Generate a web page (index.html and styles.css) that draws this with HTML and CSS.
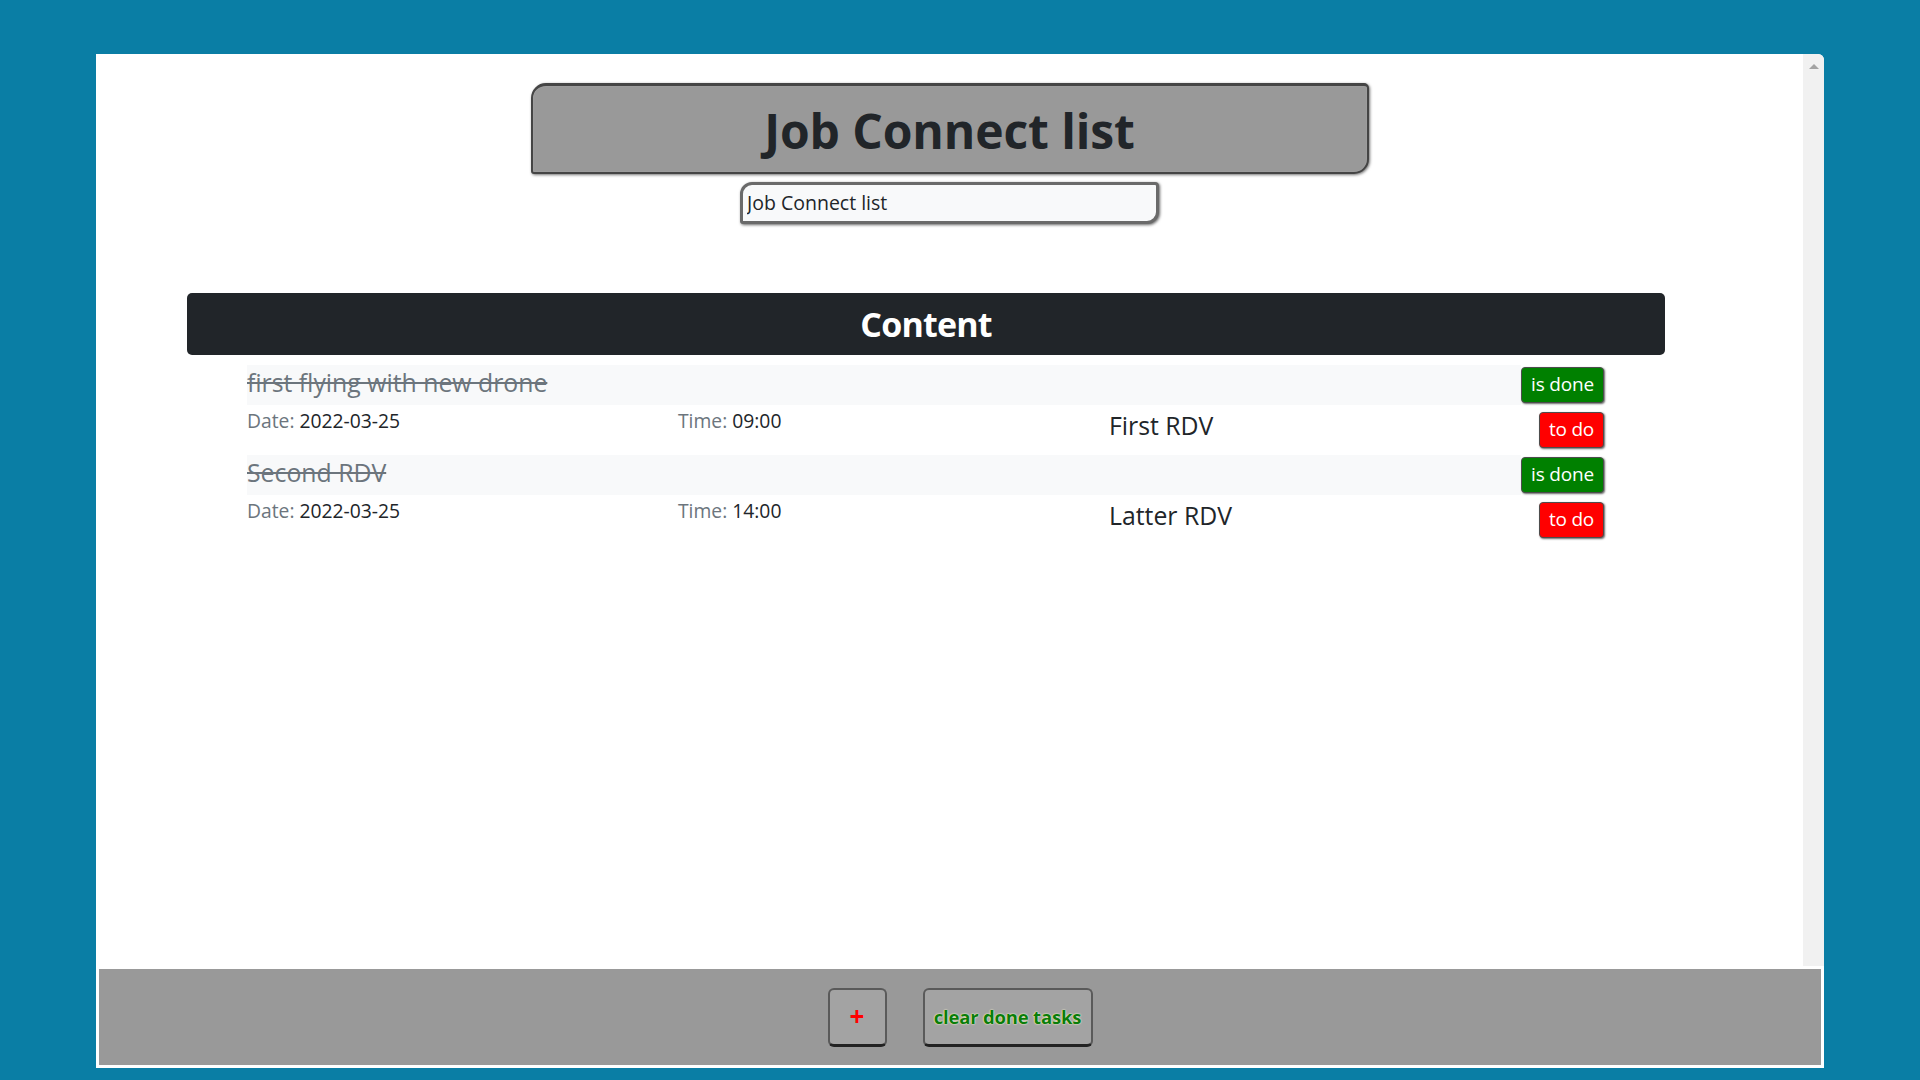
FILE: index.html
```html
<!DOCTYPE html>
<html lang="en">
<head>
<meta charset="utf-8">
<title>Job Connect list</title>
<link rel="stylesheet" href="styles.css">
</head>
<body>
<div class="app">
  <div class="viewport">
    <main class="main">
      <header class="head">
        <h1 class="title-box">Job Connect list</h1>
        <input class="title-input" type="text" value="Job Connect list">
      </header>
      <section class="content">
        <h2 class="content-bar">Content</h2>
        <div class="tasks">
          <div class="task">
            <div class="task-title-row">
              <div class="task-title">first flying with new drone</div>
              <button class="btn btn-done">is done</button>
            </div>
            <div class="task-details">
              <div class="detail"><span class="label">Date:</span> 2022-03-25</div>
              <div class="detail"><span class="label">Time:</span> 09:00</div>
              <div class="detail-name">First RDV</div>
              <button class="btn btn-todo">to do</button>
            </div>
          </div>
          <div class="task">
            <div class="task-title-row">
              <div class="task-title">Second RDV</div>
              <button class="btn btn-done">is done</button>
            </div>
            <div class="task-details">
              <div class="detail"><span class="label">Date:</span> 2022-03-25</div>
              <div class="detail"><span class="label">Time:</span> 14:00</div>
              <div class="detail-name">Latter RDV</div>
              <button class="btn btn-todo">to do</button>
            </div>
          </div>
        </div>
      </section>
    </main>
    <div class="scrollbar"><span class="arrow-up"></span></div>
  </div>
  <footer class="footer">
    <button class="fbtn fbtn-add">+</button>
    <button class="fbtn fbtn-clear">clear done tasks</button>
  </footer>
</div>
</body>
</html>
```
FILE: styles.css
```css
* { box-sizing: border-box; }
html, body { margin: 0; padding: 0; }
body {
  background: #0a7ea5;
  font-family: "Open Sans", "Noto Sans", sans-serif;
  color: #212529;
  height: 1080px;
  overflow: hidden;
  padding-top: 54px;
}
.app {
  margin: 0 96px;
  height: 1014px;
  background: #fff;
  border-radius: 0 6px 0 0;
  display: flex;
  flex-direction: column;
  overflow: hidden;
}
.viewport {
  height: 912px;
  display: flex;
}
.main { flex: 1; }
.scrollbar {
  width: 21px;
  background: #f1f1f1;
  display: flex;
  justify-content: center;
  padding-top: 10px;
}
.arrow-up {
  width: 0; height: 0;
  border-left: 5px solid transparent;
  border-right: 5px solid transparent;
  border-bottom: 5px solid #a3a3a3;
}
.head {
  display: flex;
  flex-direction: column;
  align-items: center;
  padding-top: 29px;
}
.title-box {
  margin: 0;
  width: 838px;
  height: 91px;
  background: #999;
  border: 2px solid #454545;
  border-top-width: 3px;
  border-radius: 15px 5px 15px 3px;
  box-shadow: 1px 1px 3px rgba(0,0,0,.55), inset 0 0 1px rgba(255,255,255,.4);
  display: flex;
  align-items: center;
  justify-content: center;
  font-size: 48px;
  font-weight: 700;
  letter-spacing: -0.1px;
  color: #212529;
  padding-top: 2px;
}
.title-input {
  margin-top: 8px;
  width: 419px;
  height: 42px;
  background: #f8f9fa;
  border: 3px solid #6a6a6a;
  border-radius: 12px 4px 12px 3px;
  box-shadow: 1px 1px 3px rgba(0,0,0,.6);
  font-family: "Open Sans", "Noto Sans", sans-serif;
  font-size: 19.5px;
  color: #212529;
  padding: 0 0 1px 4px;
  outline: none;
}
.content {
  margin: 69px 0 0 91px;
  width: 1478px;
}
.content-bar {
  margin: 0;
  height: 62px;
  background: #212529;
  border-radius: 5px;
  color: #fff;
  font-size: 34px;
  font-weight: 700;
  letter-spacing: -0.8px;
  display: flex;
  align-items: center;
  justify-content: center;
  padding-bottom: 1px;
}
.tasks {
  padding: 10px 61px 0 60px;
}
.task-title-row {
  display: flex;
  align-items: center;
  height: 40px;
}
.task-title {
  flex: 1;
  height: 40px;
  background: #f8f9fa;
  font-size: 24.8px;
  color: #6c757d;
  text-decoration: line-through;
  display: flex;
  align-items: center;
  padding-bottom: 6px;
}
.task-details {
  display: grid;
  grid-template-columns: 431px 431px 1fr auto;
  align-items: start;
  height: 50px;
}
.detail {
  font-size: 19.3px;
  padding-top: 2px;
  color: #212529;
}
.label { color: #6c757d; }
.detail-name {
  font-size: 24.8px;
  padding-top: 3px;
}
.btn {
  font-family: "Open Sans", "Noto Sans", sans-serif;
  font-size: 19px;
  letter-spacing: -0.2px;
  color: #fff;
  height: 36px;
  border: 1px solid #4d4d4d;
  border-radius: 4px;
  box-shadow: 1px 1px 2px rgba(0,0,0,.6);
  padding: 0 4px 2px;
  cursor: pointer;
}
.btn-done {
  width: 83px;
  background: #008000;
}
.btn-todo {
  width: 65px;
  background: #ff0000;
  margin-top: 7px;
}
.footer {
  margin: 3px 3px 3px;
  height: 96px;
  background: #999;
  display: flex;
  align-items: center;
  justify-content: center;
  gap: 36px;
}
.fbtn {
  height: 59px;
  background: #a3a3a3;
  border: 2px solid #5a5a5a;
  border-bottom: 3px solid #222;
  border-radius: 6px;
  font-family: "Open Sans", "Noto Sans", sans-serif;
  font-weight: 700;
  font-size: 18.5px;
  cursor: pointer;
}
.fbtn-add {
  width: 59px;
  color: #f00;
  font-size: 26px;
  padding: 0 0 2px;
}
.fbtn-clear {
  width: 170px;
  color: #0a7d0a;
  text-shadow: 0 0 2px #fffbd0, 0 0 1px #fffbd0;
  padding: 0 2px;
  letter-spacing: -0.2px;
}
```
